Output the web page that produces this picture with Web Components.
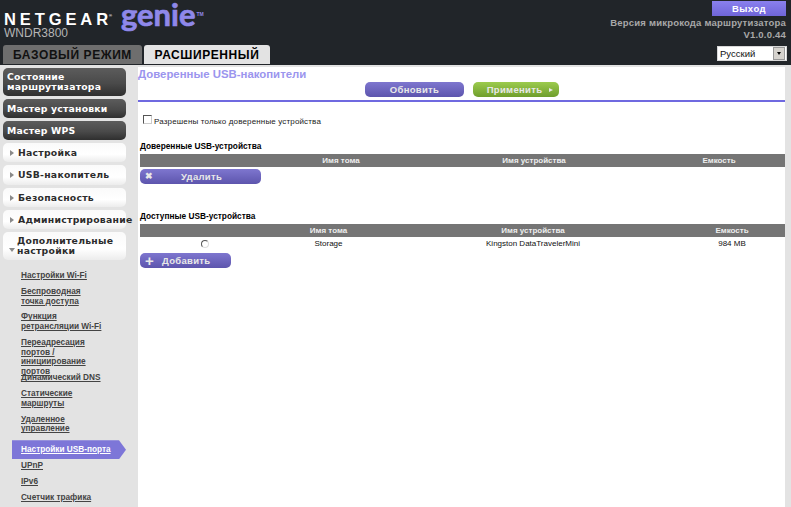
<!DOCTYPE html>
<html lang="ru">
<head>
<meta charset="utf-8">
<title>NETGEAR genie</title>
<style>
  html, body { margin: 0; height: 100%; overflow: hidden; background: #e3e3e3; }
  body { font-family: "Liberation Sans", Arial, sans-serif; }
</style>
</head>
<body>
<ng-app></ng-app>

<script>
// =============================================================================
// Header: logo, logout, firmware version, tabs, language
// =============================================================================
class NgHeader extends HTMLElement {
  constructor() {
    super();
    this.attachShadow({ mode: 'open' });
    this.shadowRoot.innerHTML = `
      <style>
        :host { display: block; height: 65px; background: #212529; overflow: hidden; }
        .top { display: flex; justify-content: space-between; height: 45px; }
        .brand { padding: 3px 0 0 4px; }
        .logo { display: flex; align-items: flex-start; height: 24px; }
        .netgear { font: bold 16.5px/26px "Liberation Sans", sans-serif; color: #fff; letter-spacing: 3.9px; }
        .reg { font-size: 4px; vertical-align: 8px; letter-spacing: 0; margin-left: -3px; }
        .genie { font: bold 31px/24px "Lato", sans-serif; color: #8f88ea; margin: -1px 0 0 9px; -webkit-text-stroke: .7px #8f88ea; }
        .tm { font: bold 5px "Liberation Sans", sans-serif; color: #8f88ea; margin: 8px 0 0 1px; }
        .model { font: 12px/12px "Liberation Sans", sans-serif; color: #b5b5b5; }
        .side { display: flex; flex-direction: column; align-items: flex-end; padding: 1px 5px 0 0; }
        .logout { width: 74px; height: 15px; background: linear-gradient(#8a80ee, #6f65d8); color: #fff; text-align: center;
                  font: bold 9.5px/15px "Liberation Sans", sans-serif; letter-spacing: .5px; }
        .version { font: bold 9.5px/12px "Liberation Sans", sans-serif; color: #a8a8a8; letter-spacing: .2px; text-align: right; margin-top: 1px; }
        .bottom { display: flex; justify-content: space-between; padding: 0 4px 0 3px; }
        .tabs { display: flex; gap: 2px; }
        .tab { height: 19px; border-radius: 3px 3px 0 0; font: bold 12px/20px "Liberation Sans", sans-serif; letter-spacing: .58px; text-align: center; }
        .basic { width: 139px; background: #6e6e6e; color: #111; }
        .adv { width: 126px; background: #e3e3e3; color: #000; }
        .lang { position: relative; width: 70px; height: 15px; margin-top: 1px; background: #fff; border: 1px solid #d8d8d8; box-sizing: border-box;
                font: 9.5px/14px "Liberation Sans", sans-serif; color: #111; padding-left: 2px; }
        .arrow { position: absolute; right: 1px; top: 0; width: 12px; height: 13px; background: #d6d3ce; border: 1px solid #999; box-sizing: border-box; }
        .arrow::after { content: ""; position: absolute; left: 3px; top: 4px; border: 2.5px solid transparent; border-top: 3px solid #000; border-bottom: 0; }
      </style>
      <div class="top">
        <div class="brand">
          <div class="logo">
            <span class="netgear">NETGEAR<span class="reg">®</span></span>
            <span class="genie">genie</span><span class="tm">TM</span>
          </div>
          <div class="model">WNDR3800</div>
        </div>
        <div class="side">
          <div class="logout">Выход</div>
          <div class="version">Версия микрокода маршрутизатора<br>V1.0.0.44</div>
        </div>
      </div>
      <div class="bottom">
        <div class="tabs">
          <div class="tab basic">БАЗОВЫЙ РЕЖИМ</div>
          <div class="tab adv">РАСШИРЕННЫЙ</div>
        </div>
        <div class="lang">Русский<span class="arrow"></span></div>
      </div>
    `;
  }
}

// =============================================================================
// Sidebar pieces
// =============================================================================
class NgNavButton extends HTMLElement {
  constructor() {
    super();
    this.attachShadow({ mode: 'open' });
    this.shadowRoot.innerHTML = `
      <style>
        :host { display: flex; align-items: center; box-sizing: border-box; width: 123px; min-height: 19px; border-radius: 5px;
                font: bold 9.3px/10px "DejaVu Sans", sans-serif; letter-spacing: .2px; white-space: nowrap; }
        :host([kind="dark"]) { background: linear-gradient(#5c5c5c, #4a4a4a 55%, #2f2f2f); color: #fff; padding: 0 4px; }
        :host([kind="light"]) { min-height: 19.25px; background: linear-gradient(#fafafa, #fff 60%, #ececec); color: #2c2c2c; padding: 1px 0 0 7px; letter-spacing: .25px; }
        :host([open]) { padding: 4px 0 4px 6px !important; }
        .tri { display: none; flex: none; width: 0; height: 0; margin-right: 4px; border-left: 4px solid #8a8a8a; border-top: 3px solid transparent; border-bottom: 3px solid transparent; }
        :host([kind="light"]) .tri { display: block; }
        :host([open]) .tri { margin: 8px 2px 0 0; border: 3px solid transparent; border-top: 4px solid #8a8a8a; border-bottom: 0; }
      </style>
      <span class="tri"></span><span><slot></slot></span>
    `;
  }
}

class NgNavLink extends HTMLElement {
  constructor() {
    super();
    this.attachShadow({ mode: 'open' });
    this.shadowRoot.innerHTML = `
      <style>
        :host { display: block; box-sizing: border-box; padding-left: 21px; width: 126px;
                font: bold 8.25px/9.7px "Liberation Sans", sans-serif; color: #444; text-decoration: underline; }
        :host([clip]) { height: 29.5px; }
        :host([active]) { margin-bottom: -4px; padding: 5px 0 5px 9px; margin-left: 12px; width: 114px; height: 19px; color: #fff; white-space: nowrap;
                          background: #7d76d8; clip-path: polygon(0 0, 107px 0, 100% 50%, 107px 100%, 0 100%); }
      </style>
      <slot></slot>
    `;
  }
}

class NgSidebar extends HTMLElement {
  constructor() {
    super();
    this.attachShadow({ mode: 'open' });
    this.shadowRoot.innerHTML = `
      <style>
        :host { display: flex; flex-direction: column; width: 138px; padding: 3px 0 0 3px; box-sizing: border-box; height: 100%; overflow: hidden; }
        .buttons { display: flex; flex-direction: column; gap: 3px; }
        .links { display: flex; flex-direction: column; gap: 6.1px; margin: 11px 0 0 -3px; }
      </style>
      <div class="buttons">
        <ng-nav-button kind="dark" style="min-height:28px">Состояние<br>маршрутизатора</ng-nav-button>
        <ng-nav-button kind="dark">Мастер установки</ng-nav-button>
        <ng-nav-button kind="dark">Мастер WPS</ng-nav-button>
        <ng-nav-button kind="light">Настройка</ng-nav-button>
        <ng-nav-button kind="light">USB-накопитель</ng-nav-button>
        <ng-nav-button kind="light">Безопасность</ng-nav-button>
        <ng-nav-button kind="light">Администрирование</ng-nav-button>
        <ng-nav-button kind="light" open>Дополнительные<br>настройки</ng-nav-button>
      </div>
      <div class="links">
        <ng-nav-link>Настройки Wi-Fi</ng-nav-link>
        <ng-nav-link>Беспроводная<br>точка доступа</ng-nav-link>
        <ng-nav-link>Функция<br>ретрансляции Wi-Fi</ng-nav-link>
        <ng-nav-link clip>Переадресация<br>портов /<br>инициирование<br>портов</ng-nav-link>
        <ng-nav-link>Динамический DNS</ng-nav-link>
        <ng-nav-link>Статические<br>маршруты</ng-nav-link>
        <ng-nav-link>Удаленное<br>управление</ng-nav-link>
        <ng-nav-link active>Настройки USB-порта</ng-nav-link>
        <ng-nav-link>UPnP</ng-nav-link>
        <ng-nav-link>IPv6</ng-nav-link>
        <ng-nav-link>Счетчик трафика</ng-nav-link>
      </div>
    `;
  }
}

// =============================================================================
// Main panel pieces
// =============================================================================
class NgButton extends HTMLElement {
  constructor() {
    super();
    this.attachShadow({ mode: 'open' });
    this.shadowRoot.innerHTML = `
      <style>
        :host { display: flex; align-items: center; justify-content: center; box-sizing: border-box; height: 15px; border-radius: 5px;
                background: linear-gradient(#7e76cf, #5d55ad); color: #e8e8e8;
                font: bold 9.5px/15px "Liberation Sans", sans-serif; letter-spacing: .3px; white-space: nowrap; }
        :host([tone="green"]) { background: linear-gradient(#9ccb4e, #6f9e2c); }
      </style>
      <slot></slot>
    `;
  }
}

class NgDeviceTable extends HTMLElement {
  constructor() {
    super();
    this.attachShadow({ mode: 'open' });
    this.shadowRoot.innerHTML = `
      <style>
        :host { display: block; }
        .title { font: bold 8.3px/10px "Liberation Sans", sans-serif; color: #000; margin-bottom: 3px; }
        .grid { display: grid; grid-template-columns: var(--cols); text-align: center; }
        .head { background: #757575; color: #eee; font: bold 8px/13px "Liberation Sans", sans-serif; height: 13px; }
        ::slotted(*) { font: 8px/13px "Liberation Sans", sans-serif; color: #111; }
      </style>
      <div class="title"></div>
      <div class="grid">
        <div class="head"></div><div class="head a"></div><div class="head b"></div><div class="head c"></div>
        <slot></slot>
      </div>
    `;
  }
  connectedCallback() {
    this.shadowRoot.querySelector('.title').textContent = this.getAttribute('heading');
    this.shadowRoot.querySelector('.a').textContent = 'Имя тома';
    this.shadowRoot.querySelector('.b').textContent = 'Имя устройства';
    this.shadowRoot.querySelector('.c').textContent = 'Емкость';
  }
}

class NgRadio extends HTMLElement {
  constructor() {
    super();
    this.attachShadow({ mode: 'open' });
    this.shadowRoot.innerHTML = `
      <style>
        :host { display: flex; justify-content: center; align-items: center; height: 13px; }
        i { display: block; box-sizing: border-box; width: 8px; height: 8px; border-radius: 50%; border: 1px solid; border-color: #555 #ddd #ddd #555; background: #fff; }
      </style>
      <i></i>
    `;
  }
}

class NgMain extends HTMLElement {
  constructor() {
    super();
    this.attachShadow({ mode: 'open' });
    this.shadowRoot.innerHTML = `
      <style>
        :host { display: block; width: 647px; height: 100%; background: #fff; box-sizing: border-box; }
        h1 { margin: 0; padding-top: 1px; font: bold 11.4px/13px "Liberation Sans", sans-serif; color: #9b95ee; }
        .actions { display: flex; justify-content: center; gap: 9px; margin-top: 1px; padding-left: 1px; height: 18px; border-bottom: 2px solid #6f69e0; }
        .actions ng-button { width: 99px; }
        .actions .apply { width: 86px; padding-left: 8px; }
        .apply i { margin-left: 7px; border-left: 4px solid #e8e8e8; border-top: 2.5px solid transparent; border-bottom: 2.5px solid transparent; }
        .check { display: flex; align-items: flex-start; gap: 2px; margin: 13px 0 0 3px; height: 10px; font: 8px/13px "Liberation Sans", sans-serif; color: #222; letter-spacing: .15px; }
        .check i { display: block; box-sizing: border-box; width: 9px; height: 9px; border: 1px solid; border-color: #555 #ccc #ccc #555; background: #fff; }
        .body { padding: 0 0 0 2px; }
        .first { margin-top: 16px; }
        .second { margin-top: 27px; }
        .del { width: 121px; margin-top: 2px; justify-content: flex-start; }
        .add { width: 91px; margin-top: 3px; justify-content: flex-start; }
        .mark { margin: 0 0 0 5px; font-size: 8.5px; width: 36px; text-align: left; }
        .add .mark { width: 17px; font-size: 15px; }
      </style>
      <h1>Доверенные USB-накопители</h1>
      <div class="actions">
        <ng-button>Обновить</ng-button>
        <ng-button class="apply" tone="green">Применить<i></i></ng-button>
      </div>
      <div class="body">
        <div class="check"><i></i>Разрешены только доверенные устройства</div>
        <ng-device-table class="first" heading="Доверенные USB-устройства" style="--cols: 127px 148px 238px 132px"></ng-device-table>
        <ng-button class="del"><span class="mark">✖</span>Удалить</ng-button>
        <ng-device-table class="second" heading="Доступные USB-устройства" style="--cols: 130px 117px 292px 106px">
          <ng-radio></ng-radio>
          <span>Storage</span>
          <span>Kingston DataTravelerMini</span>
          <span>984 MB</span>
        </ng-device-table>
        <ng-button class="add"><span class="mark">+</span>Добавить</ng-button>
      </div>
    `;
  }
}

// =============================================================================
// Page
// =============================================================================
class NgApp extends HTMLElement {
  constructor() {
    super();
    this.attachShadow({ mode: 'open' });
    this.shadowRoot.innerHTML = `
      <style>
        :host { display: flex; flex-direction: column; height: 507px; overflow: hidden; }
        .content { display: flex; flex: 1; min-height: 0; }
        ng-main { margin-top: 2px; }
      </style>
      <ng-header></ng-header>
      <div class="content">
        <ng-sidebar></ng-sidebar>
        <ng-main></ng-main>
      </div>
    `;
  }
}

customElements.define('ng-button', NgButton);
customElements.define('ng-radio', NgRadio);
customElements.define('ng-device-table', NgDeviceTable);
customElements.define('ng-nav-button', NgNavButton);
customElements.define('ng-nav-link', NgNavLink);
customElements.define('ng-sidebar', NgSidebar);
customElements.define('ng-main', NgMain);
customElements.define('ng-header', NgHeader);
customElements.define('ng-app', NgApp);
</script>
</body>
</html>
